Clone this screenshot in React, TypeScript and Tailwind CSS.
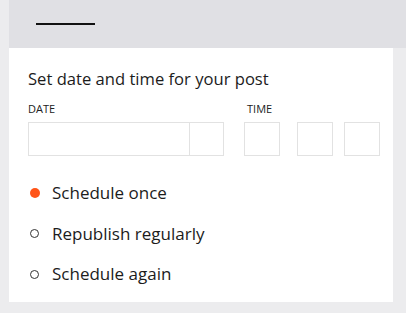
export default function App() {
  const options = [
    { label: "Schedule once", active: true },
    { label: "Republish regularly", active: false },
    { label: "Schedule again", active: false },
  ]

  return (
    <div
      className="flex h-[313px] w-[406px] flex-col bg-[#ececee] pl-[9px] text-[#1c1c1c]"
      style={{ fontFamily: '"Open Sans", "Liberation Sans", sans-serif' }}
    >
      <div className="flex h-[48px] shrink-0 items-center bg-[#e0e0e4] pl-[27px]">
        <div className="h-[2px] w-[59px] bg-[#111]" />
      </div>
      <div className="mb-[11px] mr-[13px] flex flex-1 flex-col bg-white pl-[19px] pr-[12px] pt-[19px]">
        <h1 className="text-[16.6px] leading-[24px]">Set date and time for your post</h1>

        <div className="mt-[11px] flex">
          <div className="w-[216px] shrink-0">
            <div className="text-[11px] leading-[14px] text-[#222]">DATE</div>
            <div className="mt-[6px] flex h-[34px] w-[196px] border border-[#e2e2e2]">
              <div className="flex-1" />
              <div className="w-[34px] border-l border-[#e2e2e2]" />
            </div>
          </div>
          <div className="shrink-0">
            <div className="pl-[3px] text-[11px] leading-[14px] text-[#222]">TIME</div>
            <div className="mt-[6px] flex gap-[17px]">
              <div className="h-[34px] w-[36px] border border-[#e2e2e2]" />
              <div className="flex gap-[11px]">
                <div className="h-[34px] w-[36px] border border-[#e2e2e2]" />
                <div className="h-[34px] w-[36px] border border-[#e2e2e2]" />
              </div>
            </div>
          </div>
        </div>

        <div className="mt-[25px] flex flex-col gap-[16.5px]">
          {options.map((o) => (
            <div key={o.label} className="flex h-[24px] items-center">
              <div className="flex w-[24px] items-center pl-[2px]">
                {o.active ? (
                  <span className="block h-[10px] w-[10px] rounded-full bg-[#ff5418]" />
                ) : (
                  <span className="block h-[9px] w-[9px] rounded-full border border-[#333]" />
                )}
              </div>
              <span className="text-[17px] leading-[24px]">{o.label}</span>
            </div>
          ))}
        </div>
      </div>
    </div>
  )
}
